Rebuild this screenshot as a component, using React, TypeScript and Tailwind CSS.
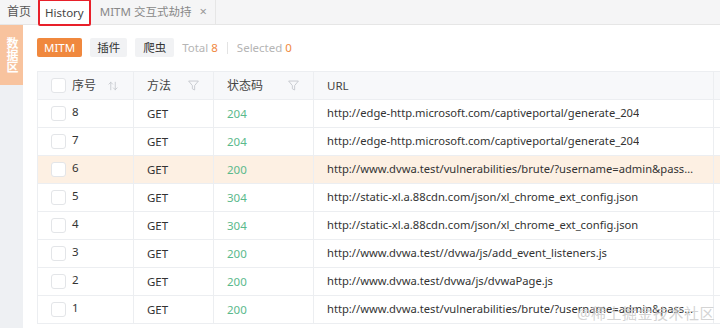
import React from 'react';

const rows = [
  { id: 8, method: 'GET', code: 204, url: 'http://edge-http.microsoft.com/captiveportal/generate_204' },
  { id: 7, method: 'GET', code: 204, url: 'http://edge-http.microsoft.com/captiveportal/generate_204' },
  { id: 6, method: 'GET', code: 200, url: 'http://www.dvwa.test/vulnerabilities/brute/?username=admin&password=password&Login=Login', active: true },
  { id: 5, method: 'GET', code: 304, url: 'http://static-xl.a.88cdn.com/json/xl_chrome_ext_config.json' },
  { id: 4, method: 'GET', code: 304, url: 'http://static-xl.a.88cdn.com/json/xl_chrome_ext_config.json' },
  { id: 3, method: 'GET', code: 200, url: 'http://www.dvwa.test//dvwa/js/add_event_listeners.js' },
  { id: 2, method: 'GET', code: 200, url: 'http://www.dvwa.test/dvwa/js/dvwaPage.js' },
  { id: 1, method: 'GET', code: 200, url: 'http://www.dvwa.test/vulnerabilities/brute/?username=admin&password=password&Login=Login' },
];

const FilterIcon = () => (
  <svg width="13" height="13" viewBox="0 0 16 16" fill="none" stroke="#c4c7cc" strokeWidth="1.1">
    <path d="M2 2.5h12l-4.6 5.6v5.4l-2.8-1.4v-4z" strokeLinejoin="round" />
  </svg>
);

const SortIcon = () => (
  <svg width="12" height="12" viewBox="0 0 16 16" fill="none" stroke="#c4c7cc" strokeWidth="1.1" strokeLinecap="round">
    <path d="M5 13V3M2.5 5.5 5 3l2.5 2.5" />
    <path d="M11 3v10M8.5 10.5 11 13l2.5-2.5" />
  </svg>
);

const Checkbox = () => (
  <span className="w-[15px] h-[15px] rounded-[3px] border border-[#e3e5e8] bg-white shrink-0" />
);

const cell = 'flex items-center border-r border-[#eceef1] px-[13px] min-w-0';

const App: React.FC = () => {
  return (
    <div
      className="relative w-[720px] h-[328px] overflow-hidden bg-white text-[12px] text-[#333]"
      style={{ fontFamily: '"Noto Sans", "Noto Sans CJK SC", sans-serif' }}
    >
      {/* tab bar */}
      <div className="flex items-stretch h-[25px] bg-[#f5f5f6] border-b border-[#e6e6e6]">
        <div className="flex items-center pl-[7px] pr-[7px] text-[#555]">首页</div>
        <div className="flex items-center px-[5px] bg-white border-2 border-[#e8202a] rounded-[2px] h-[27px] -mt-[1px] text-[#444] text-[11.5px]">History</div>
        <div className="flex items-center gap-[8px] pl-[9px] pr-[8px] text-[#888] border-r border-[#e6e6e6]">
          <span className="text-[11.5px]">MITM 交互式劫持</span>
          <span className="text-[#999] text-[13px]">×</span>
        </div>
      </div>

      <div className="flex h-[303px]">
        {/* side */}
        <div className="w-[23px] bg-[#eef0f3] flex flex-col">
          <div className="h-[60px] bg-[#f8c39e] flex items-center justify-center text-white text-[12px] font-bold leading-[13px] [writing-mode:vertical-rl]">
            数据区
          </div>
        </div>

        {/* main */}
        <div className="flex-1 pl-[14px] pt-[13px] overflow-hidden">
          <div className="flex items-center h-[19px] gap-[8px] text-[11.5px]">
            <span className="h-[19px] px-[7px] flex items-center rounded-[2px] bg-[#f0883e] text-white">MITM</span>
            <span className="h-[19px] px-[7px] flex items-center rounded-[2px] bg-[#f1f2f4] text-[#333]">插件</span>
            <span className="h-[19px] px-[8px] flex items-center rounded-[2px] bg-[#f1f2f4] text-[#333]">爬虫</span>
            <span className="text-[#b5b5b5]">
              Total <span className="text-[#f0883e]">8</span>
            </span>
            <span className="w-px h-[12px] bg-[#e3e3e3] mx-[1px]" />
            <span className="text-[#b5b5b5]">
              Selected <span className="text-[#f0883e]">0</span>
            </span>
          </div>

          <div className="mt-[14px] w-[720px] border-t border-l border-[#eceef1]">
            <div className="grid grid-cols-[96px_80px_100px_400px_1fr] h-[28px] bg-[#f7f8fa] border-b border-[#eceef1] text-[#444]">
              <div className={`${cell} gap-[6px]`}>
                <Checkbox />
                <span>序号</span>
                <span className="ml-auto mr-[1px]"><SortIcon /></span>
              </div>
              <div className={`${cell} justify-between`}>
                <span>方法</span>
                <FilterIcon />
              </div>
              <div className={`${cell} justify-between`}>
                <span>状态码</span>
                <FilterIcon />
              </div>
              <div className={`${cell} text-[11.5px]`}>URL</div>
              <div className={cell} />
            </div>
            {rows.map((r) => (
              <div
                key={r.id}
                className={`grid grid-cols-[96px_80px_100px_400px_1fr] h-[28px] border-b border-[#eceef1] ${r.active ? 'bg-[#fdf0e3]' : 'bg-white'}`}
              >
                <div className={`${cell} gap-[6px] text-[11.5px]`}>
                  <Checkbox />
                  <span className="-mt-[3px]">{r.id}</span>
                </div>
                <div className={`${cell} text-[11.5px]`}>{r.method}</div>
                <div className={`${cell} text-[11.5px] text-[#5bb98c]`}>{r.code}</div>
                <div className={`${cell} text-[11.2px]`}>
                  <span className="truncate">{r.url}</span>
                </div>
                <div className={cell} />
              </div>
            ))}
          </div>
        </div>
      </div>

      {/* watermark */}
      <div className="absolute right-[5px] bottom-[4px] text-[15px] text-[#c8c8c8]/80 tracking-[0.5px]">
        @稀土掘金技术社区
      </div>
    </div>
  );
};

export default App;
